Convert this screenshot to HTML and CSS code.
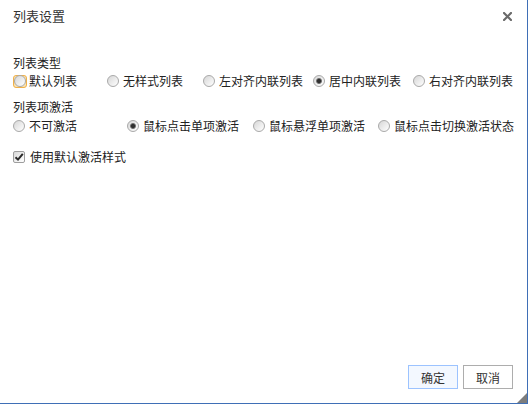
FILE: index.html
```html
<!DOCTYPE html>
<html lang="zh">
<head>
<meta charset="utf-8">
<title>列表设置</title>
<link rel="stylesheet" href="styles.css">
</head>
<body>
<div class="dialog">
  <div class="header">
    <span class="title">列表设置</span>
    <button class="close" aria-label="关闭">
      <svg width="9" height="9" viewBox="0 0 9 9"><path d="M1 1L8 8M8 1L1 8" stroke="#6a6a6a" stroke-width="2.2" stroke-linecap="square"/></svg>
    </button>
  </div>
  <div class="body">
    <div class="group-label">列表类型</div>
    <div class="row row-type">
      <label class="opt"><span class="ring"><input type="radio" name="t" class="radio"></span>默认列表</label>
      <label class="opt"><input type="radio" name="t" class="radio">无样式列表</label>
      <label class="opt"><input type="radio" name="t" class="radio">左对齐内联列表</label>
      <label class="opt"><input type="radio" name="t" class="radio" checked>居中内联列表</label>
      <label class="opt"><input type="radio" name="t" class="radio">右对齐内联列表</label>
    </div>
    <div class="group-label second">列表项激活</div>
    <div class="row row-act">
      <label class="opt"><input type="radio" name="a" class="radio">不可激活</label>
      <label class="opt"><input type="radio" name="a" class="radio" checked>鼠标点击单项激活</label>
      <label class="opt"><input type="radio" name="a" class="radio">鼠标悬浮单项激活</label>
      <label class="opt"><input type="radio" name="a" class="radio">鼠标点击切换激活状态</label>
    </div>
    <div class="row check-row">
      <label class="opt"><span class="checkbox"><svg width="10" height="10" viewBox="0 0 10 10"><path d="M1.5 5.2L4 7.6L8.8 1.8" fill="none" stroke="#2a2a2a" stroke-width="2"/></svg></span>使用默认激活样式</label>
    </div>
  </div>
  <div class="footer">
    <button class="btn primary">确定</button>
    <button class="btn">取消</button>
  </div>
  <svg class="grip" width="10" height="10" viewBox="0 0 10 10"><polygon points="10,0 10,10 0,10" fill="#7d7d7d"/></svg>
</div>
</body>
</html>
```
FILE: styles.css
```css
html, body {
  margin: 0;
  padding: 0;
  background: #fff;
}
body {
  font-family: "Noto Sans CJK SC", "Microsoft YaHei", sans-serif;
  font-size: 12px;
  color: #222;
}
.dialog {
  position: relative;
  width: 528px;
  height: 404px;
  box-sizing: border-box;
  border-right: 1px solid #3f6fb6;
  border-bottom: 1px solid #3f6fb6;
  display: flex;
  flex-direction: column;
  background: #fff;
}
.header {
  height: 32px;
  padding: 0 13px;
  display: flex;
  align-items: center;
  justify-content: space-between;
}
.title {
  font-size: 13px;
  color: #333;
  line-height: 18px;
}
.close {
  border: 0;
  background: none;
  padding: 0;
  width: 9px;
  height: 9px;
  margin-right: 2px;
  display: flex;
  cursor: pointer;
}
.body {
  flex: 1;
  padding: 22px 13px 0;
}
.group-label {
  line-height: 18px;
}
.group-label.second {
  margin-top: 8px;
}
.row {
  display: grid;
  align-items: center;
  height: 18px;
}
.row-type {
  grid-template-columns: 94px 96px 110px 100px auto;
}
.row-act {
  margin-top: 1px;
  grid-template-columns: 114px 126px 125px auto;
}
.check-row {
  margin-top: 13px;
}
.opt {
  display: flex;
  align-items: center;
  white-space: nowrap;
  line-height: 18px;
}
.radio {
  -webkit-appearance: none;
  appearance: none;
  width: 12px;
  height: 12px;
  margin: 0 4px 0 0;
  border: 1px solid #a9a9a9;
  border-radius: 50%;
  background: linear-gradient(135deg, #d6d6d6 0%, #ededed 55%, #ffffff 100%);
  box-sizing: border-box;
  flex: none;
}
.radio:checked {
  background:
    radial-gradient(circle at 50% 50%, #303030 0, #303030 1.6px, #7a7a7a 2.6px, rgba(255,255,255,0) 3.4px),
    linear-gradient(135deg, #d6d6d6 0%, #ededed 55%, #ffffff 100%);
}
.ring {
  display: inline-flex;
  align-items: center;
  justify-content: center;
  width: 14px;
  height: 13px;
  box-sizing: border-box;
  border: 1px solid #efb04a;
  border-radius: 3px;
  background: #fbe3b0;
  margin-right: 2px;
}
.ring .radio {
  margin: 0;
}
.checkbox {
  display: inline-flex;
  align-items: center;
  justify-content: center;
  width: 12px;
  height: 12px;
  box-sizing: border-box;
  border: 1px solid #9e9e9e;
  border-radius: 2px;
  background: linear-gradient(135deg, #d8d8d8 0%, #f2f2f2 60%, #fff 100%);
  margin-right: 5px;
}
.footer {
  display: flex;
  justify-content: flex-end;
  gap: 5px;
  padding: 0 14px 14px 0;
}
.btn {
  width: 50px;
  height: 24px;
  box-sizing: border-box;
  border: 1px solid #adadad;
  background: #fff;
  font-family: "Noto Sans CJK SC", sans-serif;
  font-size: 12px;
  color: #333;
  padding: 0;
  cursor: pointer;
}
.btn.primary {
  border-color: #9cc3ff;
  background: #f3f8ff;
}
.grip {
  position: absolute;
  right: 0;
  bottom: 0;
}
```
